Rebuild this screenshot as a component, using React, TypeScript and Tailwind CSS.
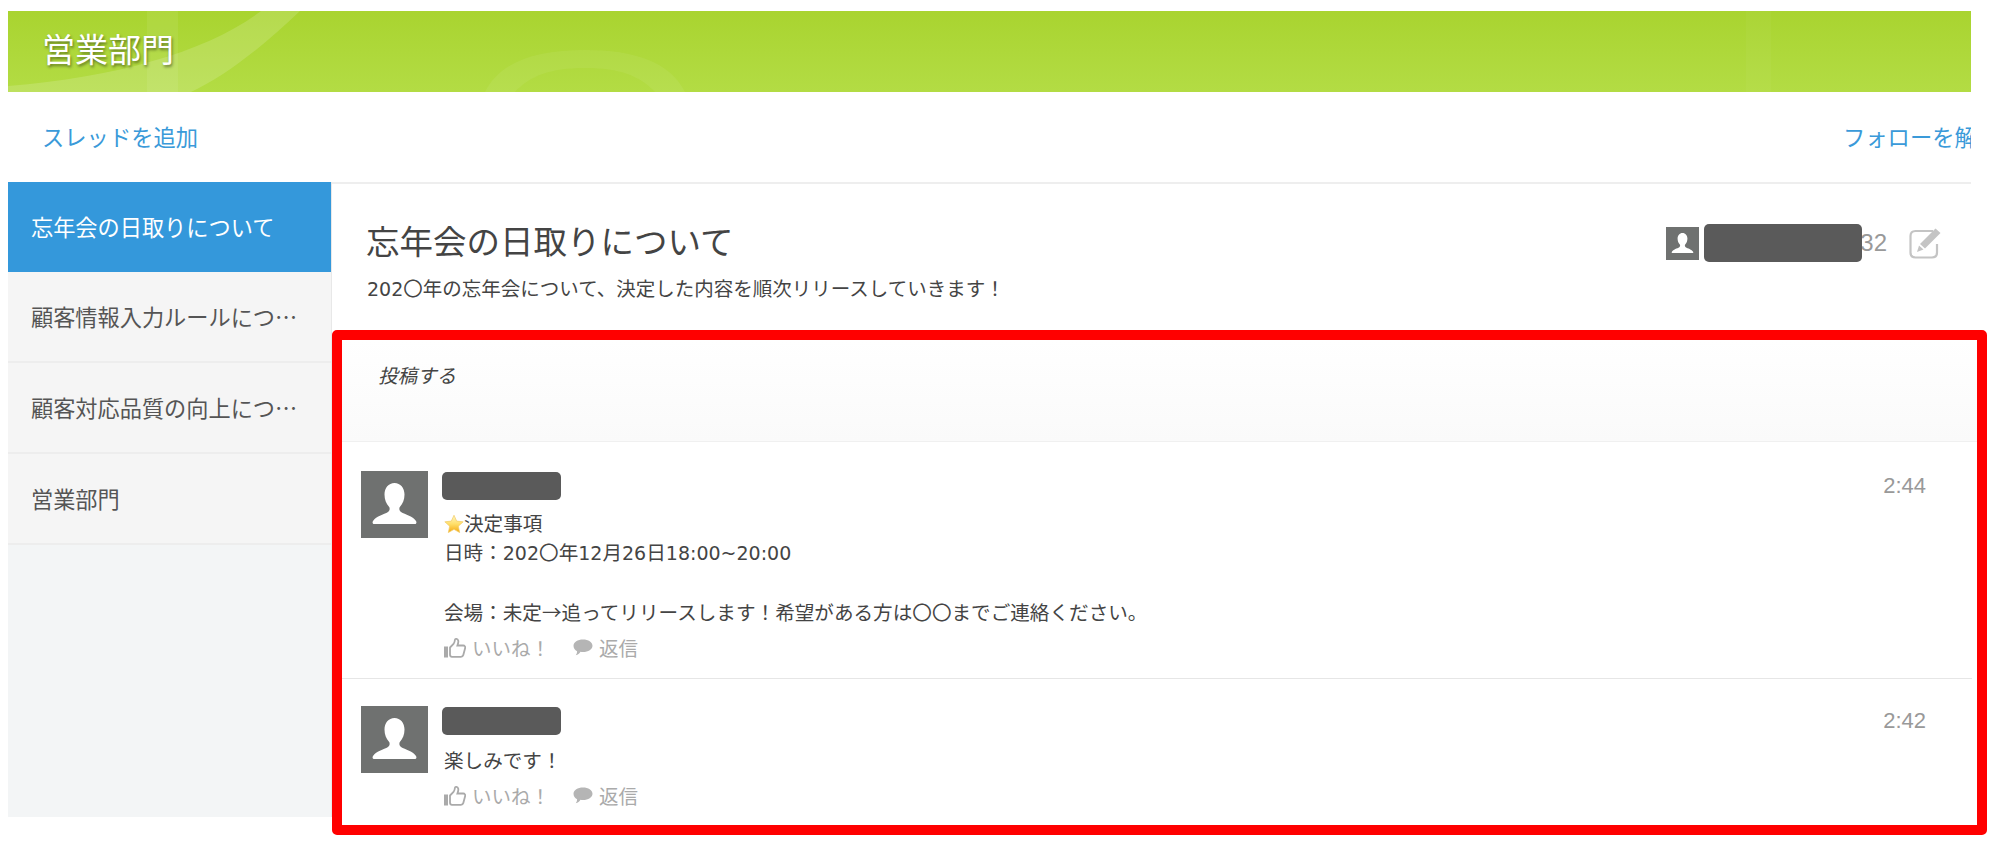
import type { ReactNode } from "react";

const threads = [
  { title: "忘年会の日取りについて", active: true },
  { title: "顧客情報入力ルールについての共有事項" },
  { title: "顧客対応品質の向上についての取り組み" },
  { title: "営業部門" },
];

function Num({ children }: { children: ReactNode }) {
  return <span className="font-['DejaVu_Sans',sans-serif] text-[19px]">{children}</span>;
}

function Avatar({ size }: { size: "lg" | "sm" }) {
  return (
    <svg
      viewBox="0 0 67 67"
      className={size === "lg" ? "h-[67px] w-[67px] shrink-0" : "h-[33px] w-[33px] shrink-0"}
    >
      <rect width="67" height="67" fill="#6f7170" />
      <path
        d="M33.500 12c-6 0-10 5-10 11.500 0 5 1.800 9.500 4.500 12.200 1 1 1 4-1 5.300-4 2.500-12.500 4.500-15 9-.8 1.300-.5 3 1 3h41c1.500 0 1.800-1.700 1-3-2.500-4.500-11-6.500-15-9-2-1.300-2-4.300-1-5.300 2.700-2.700 4.500-7.200 4.500-12.200C43.500 17 39.500 12 33.500 12z"
        fill="#ffffff"
      />
    </svg>
  );
}

function Star() {
  return (
    <svg viewBox="0 0 24 24" className="inline-block h-[20px] w-[20px] align-[-3px]">
      <defs>
        <linearGradient id="star" x1="0" y1="0" x2="0" y2="1">
          <stop offset="0" stopColor="#fff6c4" />
          <stop offset="0.5" stopColor="#ffdf6a" />
          <stop offset="1" stopColor="#f5a810" />
        </linearGradient>
      </defs>
      <path
        d="M12 1.500l3.200 7 7.800.900-5.800 5.200 1.600 7.700L12 18.400l-6.800 3.900 1.600-7.700L1 9.400l7.800-.900z"
        fill="url(#star)"
        stroke="#f0c860"
        strokeWidth="0.800"
      />
    </svg>
  );
}

function ThumbIcon() {
  return (
    <svg viewBox="0 0 22 20" className="h-[20px] w-[22px] shrink-0">
      <rect x="0" y="8.500" width="4" height="11" fill="#aaaaaa" />
      <path
        d="M6 9.500l3.500-3.500c1-1.200 1.300-2.800 1.500-4.500.1-1 2.600-.8 3.200 1 .5 1.600-.2 3.500-.8 5h5.800c1.600 0 2.300 1.400 1.900 2.800l-1.800 6.700c-.3 1.200-1.200 1.800-2.400 1.800H8c-1.200 0-2-.8-2-2z"
        fill="none"
        stroke="#aaaaaa"
        strokeWidth="1.800"
      />
    </svg>
  );
}

function ChatIcon() {
  return (
    <svg viewBox="0 0 20 17" className="h-[17px] w-[20px] shrink-0">
      <path
        d="M10 0.500c5.300 0 9.500 2.700 9.500 6.200S15.300 13 10 13c-.9 0-1.700-.1-2.500-.2-1 1.600-2.700 3-4.700 3.500.8-1.100 1.300-2.500 1.300-4C1.900 11.100.5 9 .5 6.700.5 3.200 4.700.5 10 .5z"
        fill="#b5b5b5"
      />
    </svg>
  );
}

function EditIcon() {
  return (
    <svg viewBox="0 0 33 32" className="h-[32px] w-[33px] shrink-0">
      <path
        d="M24 4H6.500C3.500 4 1.500 6 1.500 9v16.500c0 3 2 5 5 5H23c3 0 5-2 5-5V17"
        fill="none"
        stroke="#c4c4c4"
        strokeWidth="2.200"
      />
      <path d="M26.500 1.500l5 4.500L16 21.500l-5-4.500z" fill="#c4c4c4" />
      <path d="M10 18.500l4.500 4-6.500 2.500z" fill="#c4c4c4" />
    </svg>
  );
}

function Post({
  time,
  bodyTop,
  last,
  children,
}: {
  time: string;
  bodyTop: string;
  last?: boolean;
  children: ReactNode;
}) {
  return (
    <div
      className={
        last
          ? "mr-[5px] flex flex-1 justify-between pl-[19px] pt-[27px]"
          : "mr-[5px] flex h-[237px] justify-between border-b border-[#e6e6e6] pl-[19px] pt-[29px]"
      }
    >
      <div className="flex gap-[14px]">
        <Avatar size="lg" />
        <div>
          <div className="mt-px h-[28px] w-[119px] rounded-[5px] bg-[#5a5a5a]" />
          <div className={`${bodyTop} pl-[2px] text-[19.600px] leading-[29px] text-[#444]`}>{children}</div>
          <div className="mt-[7px] flex h-[29px] items-center pl-[2px] text-[19.500px] text-[#aaa]">
            <ThumbIcon />
            <span className="ml-[6px]">いいね！</span>
            <span className="ml-[23px]">
              <ChatIcon />
            </span>
            <span className="ml-[6px]">返信</span>
          </div>
        </div>
      </div>
      <div className="shrink-0 pr-[46px] font-['Liberation_Sans',sans-serif] text-[22px] leading-[30px] text-[#999]">
        {time}
      </div>
    </div>
  );
}

export default function App() {
  return (
    <div className="h-[848px] overflow-hidden bg-white pt-[11px] pl-2 font-['Noto_Sans_CJK_JP','Liberation_Sans',sans-serif]">
      <div className="w-[1963px]">
        {/* Banner */}
        <header className="relative flex h-[81px] items-center bg-gradient-to-b from-[#a9d42f] to-[#b3dc44] pl-[34px]">
          <svg
            viewBox="0 0 1963 81"
            className="absolute inset-0 h-full w-full"
            preserveAspectRatio="none"
          >
            <path d="M292 0C250 40 215 66 183 81H0v-6C110 66 200 40 253 0z" fill="#ffffff" fillOpacity="0.15" />
            <rect x="139" y="0" width="31" height="81" fill="#ffffff" fillOpacity="0.07" />
            <path
              d="M477 81c15-30 50-42 100-42s85 12 100 42h-30c-15-16-35-24-70-24s-55 8-70 24z"
              fill="#ffffff"
              fillOpacity="0.06"
            />
            <rect x="1738" y="0" width="25" height="81" fill="#ffffff" fillOpacity="0.03" />
          </svg>
          <h1 className="relative -mt-[6px] text-[33px] font-normal text-white [text-shadow:1px_2px_3px_rgba(0,0,0,0.45)]">
            営業部門
          </h1>
        </header>

        {/* Toolbar */}
        <div className="flex h-[90px] items-center justify-between pl-[34px] text-[22.300px] text-[#3a9ad9]">
          <span>スレッドを追加</span>
          <span className="w-[128px] overflow-hidden whitespace-nowrap">フォローを解除</span>
        </div>

        <div className="flex">
          {/* Thread list */}
          <nav className="h-[635px] w-[324px] shrink-0 border-r border-[#e8e8e8] bg-[#f3f5f6]">
            {threads.map((t) => (
              <div
                key={t.title}
                className={
                  t.active
                    ? "flex h-[90px] items-center bg-[#3498db] pl-[23px] pr-[30px] text-[22.200px] text-white"
                    : "flex h-[91px] items-center border-b-2 border-[#ededed] bg-[#f5f5f5] pl-[23px] pr-[30px] text-[22.200px] text-[#555]"
                }
              >
                <span className="truncate">{t.title}</span>
              </div>
            ))}
          </nav>

          <main className="min-w-0 flex-1 border-t-2 border-[#eeeeee]">
            {/* Thread head */}
            <div className="flex h-[146px] justify-between pl-[34px] pr-[29px]">
              <div className="text-[#444]">
                <h2 className="mt-[33px] text-[33.500px] font-normal leading-[46px]">忘年会の日取りについて</h2>
                <p className="mt-[11px] pl-px text-[19.500px] leading-[28px]">
                  <Num>202</Num>〇年の忘年会について、決定した内容を順次リリースしていきます！
                </p>
              </div>
              <div className="mt-[40px] flex h-[38px] items-center">
                <Avatar size="sm" />
                <div className="relative z-10 ml-[5px] h-[38px] w-[158px] rounded-[5px] bg-[#5a5a5a]" />
                <span className="-ml-[2px] font-['Liberation_Sans',sans-serif] text-[24px] text-[#999]">32</span>
                <span className="ml-[22px]">
                  <EditIcon />
                </span>
              </div>
            </div>

            {/* Highlighted area */}
            <section className="-mr-[16px] flex h-[505px] flex-col rounded-[5px] border-10 border-[#ff0000] bg-white">
              <div className="h-[102px] shrink-0 border-b border-[#f0f0f0] bg-gradient-to-b from-white to-[#fafafa] pl-[36px] pt-[21px]">
                <span className="text-[19.500px] italic leading-[28px] text-[#444]">投稿する</span>
              </div>
              <Post time="2:44" bodyTop="mt-[8px]">
                <div>
                  <Star />
                  決定事項
                </div>
                <div>
                  日時：<Num>202</Num>〇年<Num>12</Num>月<Num>26</Num>日<Num>18:00~20:00</Num>
                </div>
                <div className="h-[29px]" />
                <div>会場：未定→追ってリリースします！希望がある方は〇〇までご連絡ください。</div>
              </Post>
              <Post time="2:42" bodyTop="mt-[10px]" last>
                <div>楽しみです！</div>
              </Post>
            </section>
          </main>
        </div>
      </div>
    </div>
  );
}
